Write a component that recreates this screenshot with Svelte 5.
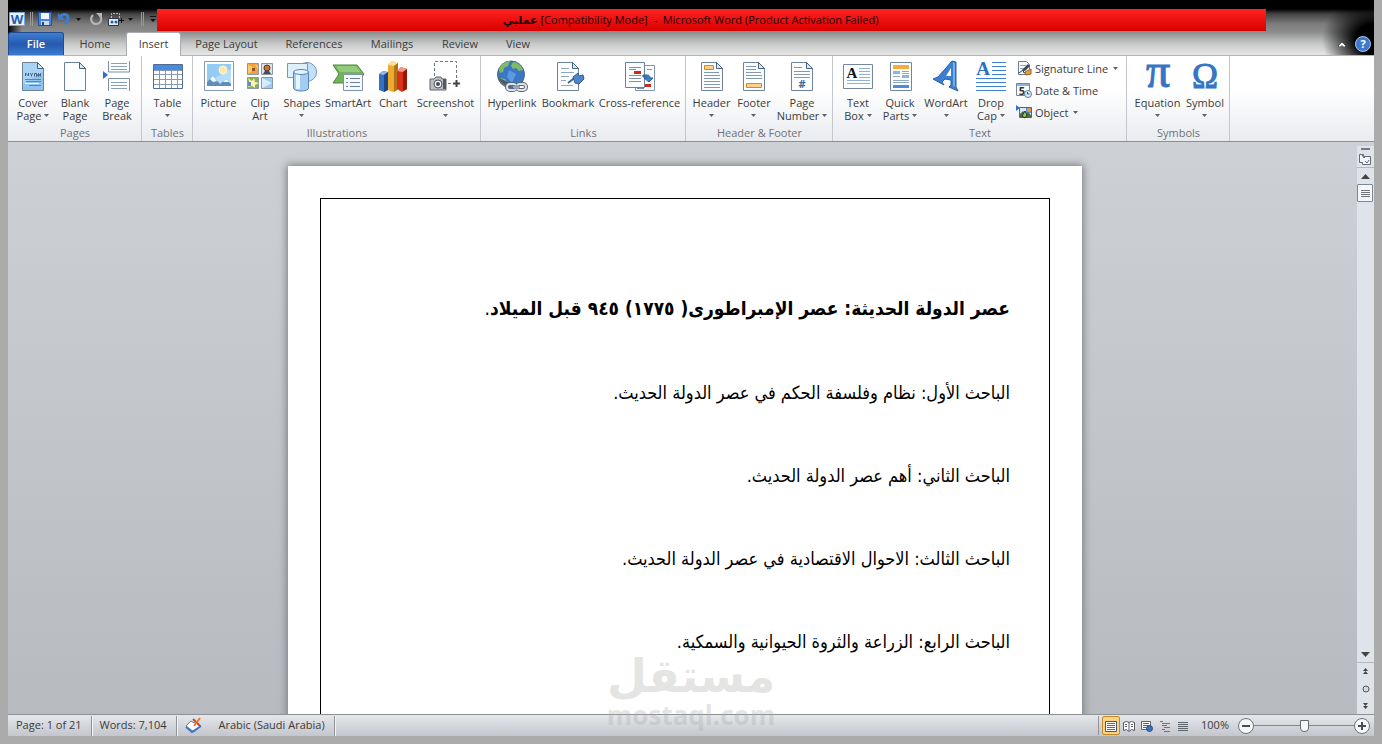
<script>
  let activeTab = 'Insert';
  let activeView = 'Print Layout';
  let zoom = 100;

  const tabs = [
    { name: 'Home', width: 62 },
    { name: 'Insert', width: 55 },
    { name: 'Page Layout', width: 91 },
    { name: 'References', width: 84 },
    { name: 'Mailings', width: 72 },
    { name: 'Review', width: 64 },
    { name: 'View', width: 52 }
  ];

  // more: 'below' puts the arrow under the label, 'inline' after its last word
  const groups = [
    {
      name: 'Pages',
      items: [
        { icon: 'cover', lines: ['Cover', 'Page'], more: 'inline', width: 42 },
        { icon: 'blank', lines: ['Blank', 'Page'], width: 42 },
        { icon: 'break', lines: ['Page', 'Break'], width: 42 }
      ]
    },
    { name: 'Tables', items: [{ icon: 'table', lines: ['Table'], more: 'below', width: 43 }] },
    {
      name: 'Illustrations',
      items: [
        { icon: 'picture', lines: ['Picture'], width: 43 },
        { icon: 'clipart', lines: ['Clip', 'Art'], width: 40 },
        { icon: 'shapes', lines: ['Shapes'], more: 'below', width: 44 },
        { icon: 'smartart', lines: ['SmartArt'], width: 48 },
        { icon: 'chart', lines: ['Chart'], width: 42 },
        { icon: 'screenshot', lines: ['Screenshot'], more: 'below', width: 63 }
      ]
    },
    {
      name: 'Links',
      items: [
        { icon: 'hyperlink', lines: ['Hyperlink'], width: 54 },
        { icon: 'bookmark', lines: ['Bookmark'], width: 58 },
        { icon: 'crossref', lines: ['Cross-reference'], width: 85 }
      ]
    },
    {
      name: 'Header & Footer',
      items: [
        { icon: 'header', lines: ['Header'], more: 'below', width: 43 },
        { icon: 'footer', lines: ['Footer'], more: 'below', width: 42 },
        { icon: 'number', lines: ['Page', 'Number'], more: 'inline', width: 54 }
      ]
    },
    {
      name: 'Text',
      items: [
        { icon: 'textbox', lines: ['Text', 'Box'], more: 'inline', width: 42 },
        { icon: 'parts', lines: ['Quick', 'Parts'], more: 'inline', width: 42 },
        { icon: 'wordart', lines: ['WordArt'], more: 'below', width: 50 },
        { icon: 'dropcap', lines: ['Drop', 'Cap'], more: 'inline', width: 40 }
      ],
      small: [
        { icon: 'signature', label: 'Signature Line', more: true },
        { icon: 'date', label: 'Date & Time' },
        { icon: 'object', label: 'Object', more: true }
      ]
    },
    {
      name: 'Symbols',
      items: [
        { icon: 'equation', lines: ['Equation'], more: 'below', width: 53 },
        { icon: 'symbol', lines: ['Symbol'], more: 'below', width: 42 }
      ]
    }
  ];

  const views = ['Print Layout', 'Full Screen Reading', 'Web Layout', 'Outline', 'Draft'];

  const chapters = [
    'الباحث الأول: نظام وفلسفة الحكم في عصر الدولة الحديث.',
    'الباحث الثاني: أهم عصر الدولة الحديث.',
    'الباحث الثالث: الاحوال الاقتصادية في عصر الدولة الحديث.',
    'الباحث الرابع: الزراعة والثروة الحيوانية والسمكية.'
  ];

  const sheet = (fill = '#fbfdff') =>
    `<path d="M5.500 2.500h15l6 6v22h-21z" fill="${fill}" stroke="#6d8299"/><path d="M20.500 2.500v6h6z" fill="#dce9f5" stroke="#47627f"/>`;

  const icons = {
    cover:
      sheet('#a9d3f5') +
      '<path d="M6 24l20-12v18H6z" fill="#8fc4ef"/><path d="M8.500 16v-3l3 3v-3M13 13l1.500 2 1.500-2M14.500 15v1.500M17.500 16.500v-3h2v3l2-3v3l2-3v3" fill="none" stroke="#47627f"/><path d="M8 19.500h16M9 21.500h15M12 25.500h12" stroke="#7e7c80"/><path d="M8 23.500h14" stroke="#fff"/>',
    blank: sheet(),
    break:
      '<path d="M7.500 1v11h21V1M7.500 31V18.500h21V31" fill="#fbfdff" stroke="#7d90a6"/><path d="M10 3.500h16M10 6.500h16M10 9.500h16M10 22.500h16M10 25.500h16M10 28.500h16" stroke="#8aa0ba"/><path d="M2 11l5 4-5 4z" fill="#2f6fd0"/>',
    table:
      '<path d="M1.500 4.500h29v24h-29z" fill="#fff" stroke="#536b8c"/><path d="M2 5h28v5H2z" fill="#4a8be0"/><path d="M2 10.500h28M2 14.500h28M2 19.500h28M2 24.500h28M7.500 10v18M13.500 10v18M19.500 10v18M25.500 10v18" stroke="#8499b4"/>',
    picture:
      '<path d="M1.500 1.500h29v29h-29z" fill="#fff" stroke="#8599b0"/><path d="M4 4h24v22H4z" fill="#b5dcf8"/><path d="M4 4h24v5L4 22z" fill="#94cbf5"/><circle cx="20" cy="10" r="4" fill="#ffe9a6" stroke="#fff6d5"/><path d="M4 26v-4l6-6 7 8 6-5 5 5v2z" fill="#5e8fb8"/><path d="M7 19l3-3 4 5-4 1zM20 22l3-3 3 3z" fill="#f4fbff"/>',
    clipart:
      '<path d="M3.500 3.500h11v11h-11z" fill="#f5a236" stroke="#8a97a8"/><path d="M4 4l7 5-7 5zM11 4l3 2v4z" fill="#ffc869"/><path d="M8 8h3v3H8z" fill="#8a5526"/><path d="M17.500 3.500h11v11h-11z" fill="#dbe0e8" stroke="#8a97a8"/><circle cx="23" cy="8" r="3" fill="#c57732" stroke="#513b2b"/><path d="M19 14l2-3h4l2 3z" fill="#484b52"/><path d="M3.500 17.500h11v11h-11z" fill="#86b24b" stroke="#8a97a8"/><path d="M4 18l4 3 2-3 1 4 4 1-4 2v3l-3-2-4 1 2-3z" fill="#fff2ac"/><path d="M4 22h3v4H4z" fill="#5d91c7"/><path d="M17.500 17.500h11v11h-11z" fill="#9dccf2" stroke="#8a97a8"/><path d="M18 28V18l10 5z" fill="#d9edfc"/>',
    shapes:
      '<circle cx="21" cy="12" r="9.500" fill="#c5e1f8" stroke="#7397bf"/><path d="M1.500 3.500h20v14h-20z" fill="#dff0fd" stroke="#7397bf"/><path d="M7.500 12v16c0 4 15 4 15 0V12z" fill="#a3cdf1" stroke="#5785b8"/><path d="M10 14v15h4V14z" fill="#e8f5ff"/><ellipse cx="15" cy="12" rx="7.500" ry="2.500" fill="#e3f2ff" stroke="#5785b8"/>',
    smartart:
      '<path d="M1 5h24l7 9-6 9H1l6-9z" fill="#72b45a" stroke="#4d8b3c"/><path d="M4 6h20l5 6H8z" fill="#93ca7c"/><path d="M11.500 14.500h19v16h-19z" fill="#f5f8fc" stroke="#8193aa"/><path d="M14 18.500h2M18 18.500h10M14 22.500h2M18 22.500h10M14 26.500h2M18 26.500h10" stroke="#6b7f99"/>',
    chart:
      '<path d="M2 14l4-3 5 1v18l-4 2-5-2z" fill="#356fc0"/><path d="M2 14l4-3 5 1-4 3z" fill="#8fbaf0"/><path d="M7 15l4-3v18l-4 2z" fill="#1d4685"/><path d="M11 5l4-4 6 2v27l-5 2-5-2z" fill="#efa92c"/><path d="M11 5l4-4 6 2-4 3z" fill="#ffe09a"/><path d="M17 6l4-3v26l-4 3z" fill="#b27316"/><path d="M20 11l4-4 6 2v20l-5 3-5-3z" fill="#d9331b"/><path d="M20 11l4-4 6 2-4 3z" fill="#f79a85"/><path d="M26 12l4-3v20l-4 2z" fill="#93190c"/>',
    screenshot:
      '<path d="M4.500 16V1.500h22V20M18 23.500h5" fill="none" stroke="#6d7784" stroke-dasharray="3 2"/><path d="M23 23.500h7M26.500 20v7" stroke="#444" stroke-width="2"/><path d="M0 19h4l2-2h5l1 2h4v11H0z" fill="#b9bdc2" stroke="#62676d"/><path d="M13 19h3v10h-3z" fill="#54595f"/><circle cx="8" cy="24" r="4" fill="#f2f4f6" stroke="#4a4f55"/><circle cx="8" cy="24" r="2" fill="#39506b"/>',
    hyperlink:
      '<circle cx="15" cy="14.500" r="13.500" fill="#3a78c5" stroke="#4c5f78"/><path d="M3 9c2-5 7-8 11-8l-2 5-4 2-1 4-3 1zM17 2c5 0 9 4 10 8l-4 1-3-3-3 1-2-3zM4 18l5 1 3 4-2 4c-4-2-6-5-6-9z" fill="#7fba64"/><path d="M3 18c2 6 7 9 12 9l-3-5z" fill="#505a66"/><path d="M13 10l7 4-4 9-5-6z" fill="#5b9ae2"/><g fill="none"><rect x="11" y="24" width="9" height="6" rx="3" stroke="#5b6674" stroke-width="4"/><rect x="21" y="24" width="9" height="6" rx="3" stroke="#5b6674" stroke-width="4"/><rect x="11" y="24" width="9" height="6" rx="3" stroke="#dde3ea" stroke-width="2"/><rect x="21" y="24" width="9" height="6" rx="3" stroke="#dde3ea" stroke-width="2"/><path d="M17 27h7" stroke="#5b6674" stroke-width="3"/><path d="M17 27h7" stroke="#dde3ea"/></g>',
    bookmark:
      sheet() +
      '<path d="M9 8.500h8M9 12.500h13M9 16.500h8M9 20.500h5M9 25.500h12" stroke="#92a6bf"/><path d="M16 23l9-7" stroke="#3b679f" stroke-width="2"/><path d="M21 17l5-4 1 3 4-1 1 4-5 5-4-1z" fill="#4f86c9" stroke="#2f5d9c"/>',
    crossref:
      '<path d="M11.500 5.500h19v25h-19z" fill="#fbfdff" stroke="#8094ad"/><path d="M1.500 2.500h19v25h-19z" fill="#fbfdff" stroke="#6d8299"/><path d="M5 7.500h12M5 9.500h7M5 15.500h12M5 18.500h12M5 21.500h12M23 9.500h5M13 28.500h7" stroke="#7d92ab"/><path d="M10 11h7v3h-7zM21 24h6v3h-6z" fill="#d5281a"/><path d="M19 15h4c2 0 3 1 3 3h3l-4 4-5-4h3c0-1-1-1-4-1z" fill="#3f7fcb" stroke="#2c5e9e"/>',
    header:
      sheet() +
      '<path d="M8.500 5.500h9v4h-9z" fill="#ffd08a" stroke="#d9861d"/><path d="M8 12.500h15M8 15.500h16M8 18.500h16M8 21.500h16M8 24.500h16M8 27.500h16" stroke="#8298b1"/>',
    footer:
      sheet() +
      '<path d="M8 6.500h10M8 9.500h10M8 12.500h15M8 15.500h16M8 18.500h16" stroke="#8298b1"/><path d="M8.500 23.500h15v4h-15z" fill="#ffd08a" stroke="#d9861d"/>',
    number:
      sheet() +
      '<path d="M8 7.500h8M8 11.500h16M8 14.500h16M8 17.500h16" stroke="#8298b1"/><text x="16" y="28" text-anchor="middle" font-size="11" font-weight="bold" fill="#44699b">#</text>',
    textbox:
      '<path d="M1.500 4.500h29v24h-29z" fill="#fdfeff" stroke="#76879c"/><path d="M17 8.500h11M17 11.500h11M17 14.500h11M17 17.500h11M5 20.500h23M5 23.500h23" stroke="#93b0d2"/><text x="10" y="18" text-anchor="middle" font-size="15" font-weight="bold" font-family="Liberation Serif, serif" fill="#111">A</text>',
    parts:
      '<path d="M6.500 2.500h21v28h-21z" fill="#fdfeff" stroke="#70859e"/><path d="M9 5h16v4H9z" fill="#f6ab41"/><path d="M9 11h7v3H9zM18 15h7v3h-7z" fill="#93b4da"/><path d="M18 11.500h7M9 16.500h7M9 20.500h16M18 13.500h7M9 22.500h16" stroke="#93a7be"/><path d="M9 25h16v3H9z" fill="#4c8bdd"/>',
    wordart:
      '<path d="M22 1l4 1v25l2 4-9-4 2-2v-5l-6-1-3 3 2 3-11-6 5-2z" fill="#3a7fd2" stroke="#2b5fa7"/><path d="M16 16l5-8v8z" fill="#fff"/><path d="M23 2l2 1v24l-2-1z" fill="#73aeeb"/>',
    dropcap:
      '<text x="8" y="15" text-anchor="middle" font-size="19" font-weight="bold" font-family="Liberation Serif, serif" fill="#2d70c4">A</text><path d="M17 2.500h14M17 6.500h14M17 10.500h14M17 14.500h14M1 18.500h30M1 22.500h30M1 26.500h30M1 30.500h30" stroke="#3f82d3"/>',
    equation:
      '<text x="16" y="27" text-anchor="middle" font-size="48" stroke="#3674c4" font-family="Liberation Serif, serif" fill="#3674c4">π</text>',
    symbol:
      '<text x="16" y="28" text-anchor="middle" font-size="35" stroke="#3674c4" font-family="Liberation Serif, serif" fill="#3674c4">Ω</text>',
    signature:
      '<path d="M2.500 1.500h8l3 3v10h-11z" fill="#f7fafd" stroke="#6b7d92"/><path d="M4 5.500h6M4 8.500h5" stroke="#93a5ba"/><path d="M3 13l4-3 1 3 3-1" fill="none" stroke="#26364a"/><path d="M6 10l6-6 2 2-5 5z" fill="#3e4650"/><path d="M9 12l6-3v5l-5 1z" fill="#e5a135" stroke="#9d6416"/>',
    date:
      '<path d="M.5 1.500h13v12H.5z" fill="#fff" stroke="#7086a3"/><path d="M1 2h12v2H1z" fill="#8ab3e2"/><text x="6" y="13" text-anchor="middle" font-size="11" font-weight="bold" fill="#333">5</text><circle cx="12" cy="12" r="3.500" fill="#dcebfa" stroke="#5d7ca3"/><path d="M11.500 10v2h2" fill="none" stroke="#33506f"/>',
    object:
      '<path d="M3.500 3.500h12v10h-12z" fill="#d9e9f8" stroke="#54657a"/><path d="M10 4h5v5h-5z" fill="#5c8ecb"/><circle cx="13" cy="6" r="2" fill="#f0a030"/><path d="M4 14v-4l3-3 3 3 2-2 3 3v3z" fill="#4c6b48"/><path d="M6 12l3-5 2 4-2 3z" fill="#8fc95e" stroke="#26331f"/><path d="M0 1l4 3-4 3z" fill="#2f6fd0"/>'
  };

  const viewIcons = {
    'Print Layout':
      '<path d="M1.500 2.500h11v10h-11z" fill="#fff" stroke="#4d5560"/><path d="M3 4.500h8M3 6.500h8M3 8.500h8M3 10.500h8" stroke="#5f6874"/>',
    'Full Screen Reading':
      '<path d="M1.500 3.500l3-1 2.500 1 2.500-1 3 1v8l-3-1-2.500 2-2.500-2-3 1z" fill="#fff" stroke="#555c64"/><path d="M7 3v9M3 5.500h2M3 7.500h2M9 5.500h2M9 7.500h2" stroke="#555c64"/>',
    'Web Layout':
      '<path d="M1.500 2.500h9v8h-9z" fill="#fff" stroke="#5d646c"/><path d="M3 4.500h6M3 6.500h6M3 8.500h3" stroke="#5d646c"/><circle cx="9.500" cy="9.500" r="3" fill="#3871bd" stroke="#274f85"/>',
    Outline:
      '<path d="M2 2.500h3M4 4.500h8M4 6.500h5M6 8.500h6M4 10.500h3M6 12.500h6" stroke="#6d7379"/>',
    Draft: '<path d="M2 3.500h10M2 5.500h10M2 7.500h10M2 9.500h10M2 11.500h10" stroke="#5d646c"/>'
  };
</script>

{#snippet arrow()}
  <svg class="arrow" viewBox="0 0 5 3" aria-hidden="true"><path d="M0 0h5L2.500 3z" /></svg>
{/snippet}

<div class="window">
  <header class="top">
    <div class="titlebar">
      <div class="quick">
        <svg width="16" height="16" viewBox="0 0 16 16" aria-hidden="true">
          <path d="M.5 1.500h15v13H.5z" fill="#e8f2fc" stroke="#7aa5dc" />
          <text x="8" y="13" text-anchor="middle" font-size="13" font-weight="bold" fill="#1f5bb0">W</text>
        </svg>
        <span class="bar"></span>
        <button aria-label="Save">
          <svg width="14" height="14" viewBox="1 1 14 14">
            <path d="M1.500 1.500h13v13h-13z" fill="#4684df" stroke="#234e99" />
            <path d="M4 2h8v6H4z" fill="#f3f8ff" />
            <path d="M4 10h8v4H4z" fill="#cddcf0" />
            <path d="M5 11h2v3H5z" fill="#26436f" />
          </svg>
        </button>
        <button aria-label="Undo" class="wide">
          <svg width="15" height="14" viewBox="0 0 15 14">
            <path d="M3 5c3-4 8-3 8 1 0 3-1 4-3 6" fill="none" stroke="#3c7cd0" stroke-width="3" />
            <path d="M1 1v7h7z" fill="#3c7cd0" />
          </svg>
          {@render arrow()}
        </button>
        <button aria-label="Repeat">
          <svg width="14" height="14" viewBox="0 0 14 14">
            <path d="M4 3c-4 4-1 9 3 9s7-4 4-8" fill="none" stroke="#b3b6b9" stroke-width="2" />
            <path d="M7 1h6v6z" fill="#b3b6b9" />
          </svg>
        </button>
        <button aria-label="Insert screenshot" class="wide">
          <svg width="16" height="15" viewBox="0 0 16 15">
            <path d="M3.500 6V1.500h8V7" fill="none" stroke="#bbb" stroke-dasharray="2 1" />
            <path d="M.5 6.500h10v7H.5z" fill="#e5ebf2" stroke="#2d3743" />
            <circle cx="4" cy="10" r="1.500" fill="#2b5eaa" />
            <circle cx="8" cy="10" r="1.500" fill="#2b5eaa" />
            <path d="M11 8.500h5M13.500 6v5" stroke="#111" />
          </svg>
          {@render arrow()}
        </button>
        <span class="bar"></span>
        <button aria-label="Customize Quick Access Toolbar">
          <svg width="8" height="8" viewBox="0 0 8 8"><path d="M1 1.500h6" stroke="#111" /><path d="M1 4h6L4 7z" fill="#111" /></svg>
        </button>
      </div>
      <h1 class="title"><bdi>عملبي</bdi> [Compatibility Mode]&nbsp; -&nbsp; Microsoft Word (Product Activation Failed)</h1>
    </div>

    <nav class="tabs">
      <button class="file">File</button>
      {#each tabs as tab}
        <button
          class="tab"
          class:active={activeTab === tab.name}
          style="width: {tab.width}px"
          on:click={() => (activeTab = tab.name)}>{tab.name}</button>
      {/each}
      <div class="tab-tools">
        <button aria-label="Minimize the Ribbon">
          <svg width="10" height="8" viewBox="0 0 10 8"><path d="M1 6l4-4 4 4-1 1H6.500L5 5.500 3.500 7H2z" fill="#fff" stroke="#555" /></svg>
        </button>
        <button class="help" aria-label="Help">?</button>
      </div>
    </nav>
  </header>

  <section class="ribbon">
    {#each groups as group}
      <div class="group">
        <div class="items">
          {#each group.items as item}
            <button class="big" style="width: {item.width}px">
              <svg width="32" height="32" viewBox="0 0 32 32" aria-hidden="true">{@html icons[item.icon]}</svg>
              <span class="label">
                {#each item.lines as line, i}
                  <span class="line">{line}{#if item.more === 'inline' && i === item.lines.length - 1}{@render arrow()}{/if}</span>
                {/each}
                {#if item.more === 'below'}
                  <span class="line">{@render arrow()}</span>
                {/if}
              </span>
            </button>
          {/each}
          {#if group.small}
            <div class="small-items">
              {#each group.small as item}
                <button class="small">
                  <svg width="16" height="16" viewBox="0 0 16 16" aria-hidden="true">{@html icons[item.icon]}</svg>
                  <span>{item.label}</span>
                  {#if item.more}{@render arrow()}{/if}
                </button>
              {/each}
            </div>
          {/if}
        </div>
        <div class="group-name">{group.name}</div>
      </div>
    {/each}
  </section>

  <main class="workspace">
    <div class="canvas">
      <article class="page" dir="rtl" lang="ar">
        <div class="page-border">
          <h2><b>عصر الدولة الحديثة: عصر الإمبراطورى( ١٧٧٥) ٩٤٥ قبل الميلاد</b>.</h2>
          {#each chapters as chapter}
            <p>{chapter}</p>
          {/each}
        </div>
      </article>
    </div>

    <div class="scrollbar">
      <span class="split"></span>
      <button aria-label="View Ruler" class="ruler">
        <svg width="13" height="13" viewBox="0 0 13 13">
          <path d="M.5 9.500v-8h4v2h7v8h-8v-2z" fill="#f3f4f6" stroke="#666c74" />
          <path d="M3 2l2 3 2-2M6 8l2 2 2-3" fill="none" stroke="#666c74" />
        </svg>
      </button>
      <button aria-label="Scroll up">
        <svg width="9" height="5" viewBox="0 0 9 5"><path d="M0 5h9L4.500 0z" fill="#444" /></svg>
      </button>
      <div class="track">
        <button aria-label="Scroll position" class="thumb">
          <svg width="9" height="9" viewBox="0 0 9 9"><path d="M0 1.500h9M0 3.500h9M0 5.500h9M0 7.500h9" stroke="#70757c" /></svg>
        </button>
      </div>
      <button aria-label="Scroll down">
        <svg width="9" height="5" viewBox="0 0 9 5"><path d="M0 0h9L4.500 5z" fill="#444" /></svg>
      </button>
      <div class="browse">
        <button aria-label="Previous page">
          <svg width="7" height="7" viewBox="0 0 7 7"><path d="M1 3h5L3.500 0zM1 6h5L3.500 3z" fill="#444" /></svg>
        </button>
        <button aria-label="Select browse object">
          <svg width="8" height="8" viewBox="0 0 8 8"><circle cx="4" cy="4" r="3" fill="#d5d8dc" stroke="#555" /></svg>
        </button>
        <button aria-label="Next page">
          <svg width="7" height="7" viewBox="0 0 7 7"><path d="M1 1h5L3.500 4zM1 4h5L3.500 7z" fill="#444" /></svg>
        </button>
      </div>
    </div>
  </main>

  <footer class="status">
    <button class="cell">Page: 1 of 21</button>
    <button class="cell">Words: 7,104</button>
    <button class="cell language">
      <svg width="18" height="16" viewBox="0 0 18 16" aria-hidden="true">
        <path d="M1 9l5-5 3 2 2-1 5 4-7 6z" fill="#fff" stroke="#5b7fae" />
        <path d="M1 10l6 5 9-6" fill="none" stroke="#3f78c5" stroke-width="2" />
        <path d="M8 2l7 7" stroke="#e0451f" stroke-width="2" />
        <path d="M15 1L9 9" stroke="#ee7a1c" stroke-width="2" />
      </svg>
      Arabic (Saudi Arabia)
    </button>
    <div class="views">
      {#each views as view}
        <button aria-label={view} class:active={activeView === view} on:click={() => (activeView = view)}>
          <svg width="14" height="14" viewBox="0 0 14 14">{@html viewIcons[view]}</svg>
        </button>
      {/each}
    </div>
    <div class="zoom">
      <label for="zoom">{zoom}%</label>
      <button aria-label="Zoom out" on:click={() => (zoom -= 10)}>
        <svg width="16" height="16" viewBox="0 0 16 16"><circle cx="8" cy="8" r="7.500" fill="#f6f7f8" stroke="#6d7278" /><path d="M4 8h8" stroke="#4a4e53" stroke-width="2" /></svg>
      </button>
      <input id="zoom" type="range" min="0" max="200" bind:value={zoom} />
      <button aria-label="Zoom in" on:click={() => (zoom += 10)}>
        <svg width="16" height="16" viewBox="0 0 16 16"><circle cx="8" cy="8" r="7.500" fill="#f6f7f8" stroke="#6d7278" /><path d="M4 8h8M8 4v8" stroke="#4a4e53" stroke-width="2" /></svg>
      </button>
    </div>
  </footer>

  <div class="watermark">
    <span class="mark-ar" lang="ar">مستقل</span>
    <span class="mark-en">mostaql.com</span>
  </div>
</div>

<style>
  :global(body) {
    margin: 0;
    background: #ababab;
  }

  .window {
    position: relative;
    display: flex;
    flex-direction: column;
    box-sizing: border-box;
    height: 100vh;
    padding: 0 8px 8px;
    overflow: hidden;
    font: 11px/13px "Open Sans", "Noto Sans", "DejaVu Sans", sans-serif;
    color: #3b3b3b;
  }

  button {
    padding: 0;
    border: none;
    background: none;
    color: inherit;
    font: inherit;
    white-space: nowrap;
  }

  svg {
    display: block;
    flex: none;
    overflow: visible;
  }

  .arrow {
    width: 5px;
    height: 3px;
    fill: #5c6068;
  }

  .top {
    background:
      radial-gradient(ellipse 52px 44px at 100% 70%, #000 35%, transparent),
      linear-gradient(90deg, #000, transparent 14px),
      linear-gradient(#000 9px, #444 14px, #7c7c7c 24px, #8c8c8c 32px, #c8caca 44px, #e6e6e6 55px);
  }

  .titlebar {
    display: flex;
    height: 23px;
    padding-top: 9px;
  }

  .quick {
    display: flex;
    align-items: center;
    gap: 5px;
    width: 149px;
    height: 20px;
    padding-left: 1px;
    box-sizing: border-box;
  }

  .quick .arrow {
    fill: #111;
  }

  .quick .wide {
    display: flex;
    align-items: center;
    gap: 4px;
    margin-right: 3px;
  }

  .bar {
    width: 1px;
    height: 14px;
    border: 1px solid #999;
    border-width: 0 1px;
  }

  .title {
    flex: 1;
    height: 22px;
    margin: 0 108px 0 0;
    background: linear-gradient(#ff2222, #d90000);
    color: #1c0000;
    font-size: 11px;
    font-weight: 400;
    line-height: 22px;
    text-align: center;
    white-space: nowrap;
    padding-right: 42px;
  }

  .title bdi {
    font-weight: 700;
  }

  .tabs {
    display: flex;
    height: 23px;
    border-bottom: 1px solid #b1b5ba;
  }

  .file {
    width: 56px;
    height: 23px;
    padding-bottom: 2px;
    border: 1px solid #1f4c94;
    border-bottom: none;
    border-radius: 3px 3px 0 0;
    background: linear-gradient(#3f7fd2, #2459ae 50%, #3b7bd0);
    color: #fff;
    font-weight: 600;
  }

  .tab {
    height: 24px;
    padding-bottom: 2px;
  }

  .tab.active {
    border: 1px solid #a8acb1;
    border-bottom: none;
    border-radius: 3px 3px 0 0;
    background: #fff;
  }

  .tab-tools {
    display: flex;
    align-items: center;
    gap: 8px;
    margin-left: auto;
    padding-right: 3px;
  }

  .help {
    width: 16px;
    height: 16px;
    border: 1px solid #a9c6ef;
    border-radius: 50%;
    background: #3f79cb;
    color: #fff;
    font-weight: 700;
  }

  .ribbon {
    display: flex;
    border-bottom: 1px solid #8b9097;
    background: linear-gradient(#fff 40%, #e9ebef);
  }

  .group {
    display: flex;
    flex-direction: column;
    padding: 4px 3px 1px 4px;
    border-right: 1px solid #c3c7cd;
    box-sizing: border-box;
  }

  .items {
    display: flex;
    height: 66px;
  }

  .big {
    display: flex;
    flex-direction: column;
    align-items: center;
    gap: 4px;
  }

  .label {
    display: flex;
    flex-direction: column;
    align-items: center;
  }

  .line {
    display: flex;
    align-items: center;
    justify-content: center;
    gap: 3px;
    height: 13px;
  }

  .small-items {
    display: flex;
    flex-direction: column;
    gap: 6px;
    width: 112px;
    padding-left: 5px;
    box-sizing: border-box;
  }

  .small {
    display: flex;
    align-items: center;
    gap: 3px;
    height: 16px;
  }

  .small .arrow {
    margin-left: 2px;
  }

  .group-name {
    height: 14px;
    color: #6f7277;
    text-align: center;
  }

  .workspace {
    display: flex;
    flex: 1;
    min-height: 0;
    background: linear-gradient(#cdd0d4, #b7babe);
  }

  .canvas {
    display: flex;
    justify-content: center;
    flex: 1;
    padding: 24px 0 0 5px;
    overflow: hidden;
  }

  .page {
    width: 794px;
    height: 1123px;
    padding: 32px;
    box-sizing: border-box;
    background: #fff;
    box-shadow: 0 0 8px 1px #74797f;
    color: #000;
    font-family: "DejaVu Sans Condensed", "DejaVu Sans", sans-serif;
  }

  .page-border {
    height: 100%;
    padding: 94px 39px 0;
    border: 1px solid #000;
    box-sizing: border-box;
  }

  h2 {
    margin: 0 0 55px;
    font-size: 19px;
    font-weight: 400;
    line-height: 30px;
    white-space: nowrap;
  }

  p {
    margin: 0 0 53px;
    font-size: 18px;
    line-height: 30px;
    white-space: nowrap;
  }

  .scrollbar {
    display: flex;
    flex-direction: column;
    width: 17px;
    margin-top: 4px;
    background: #dfe3ea;
  }

  .scrollbar button {
    display: flex;
    align-items: center;
    justify-content: center;
    height: 16px;
  }

  .split {
    width: 9px;
    height: 2px;
    margin: 2px auto;
    background: #777c83;
  }

  .scrollbar .ruler {
    border-bottom: 1px solid #b5b9bf;
  }

  .track {
    flex: 1;
  }

  .scrollbar .thumb {
    width: 16px;
    height: 18px;
    border: 1px solid #7e8794;
    border-radius: 1px;
    background: #f4f6f9;
  }

  .browse {
    border-top: 1px solid #b5b9bf;
  }

  .browse button {
    width: 100%;
    height: 17px;
  }

  .status {
    display: flex;
    align-items: center;
    height: 21px;
    border-top: 1px solid #8d9196;
    background: linear-gradient(#e5e7eb, #c3c6cc);
  }

  .cell {
    height: 20px;
    padding: 0 9px 2px 8px;
    border-right: 1px solid #909499;
    box-shadow: 1px 0 #f2f3f5;
  }

  .language {
    display: flex;
    align-items: center;
    gap: 16px;
  }

  .views {
    display: flex;
    margin-left: auto;
    padding-left: 3px;
    border-left: 1px solid #909499;
  }

  .views button {
    display: flex;
    align-items: center;
    justify-content: center;
    width: 18px;
    height: 19px;
    box-sizing: border-box;
  }

  .views button.active {
    border: 1px solid #c28a2b;
    border-radius: 2px;
    background: #fbd383;
  }

  .zoom {
    display: flex;
    align-items: center;
    padding-right: 4px;
  }

  .zoom label {
    width: 46px;
    padding-bottom: 2px;
    text-align: center;
  }

  .zoom input {
    width: 100px;
    height: 16px;
    margin: 0;
    appearance: none;
    background: linear-gradient(#85898e, #85898e) center / 100% 1px no-repeat;
  }

  .zoom input::-webkit-slider-thumb {
    appearance: none;
    width: 9px;
    height: 12px;
    border: 1px solid #666b72;
    border-radius: 1px 1px 5px 5px;
    background: #f8f9fa;
  }

  .watermark {
    position: absolute;
    bottom: 16px;
    left: 50%;
    display: flex;
    flex-direction: column;
    align-items: center;
    transform: translateX(-50%);
    color: #a8a8a4;
    font-weight: 700;
    opacity: 0.3;
    pointer-events: none;
  }

  .mark-ar {
    font: 700 46px/52px "DejaVu Sans", sans-serif;
  }

  .mark-en {
    font-size: 26px;
    line-height: 26px;
  }
</style>
